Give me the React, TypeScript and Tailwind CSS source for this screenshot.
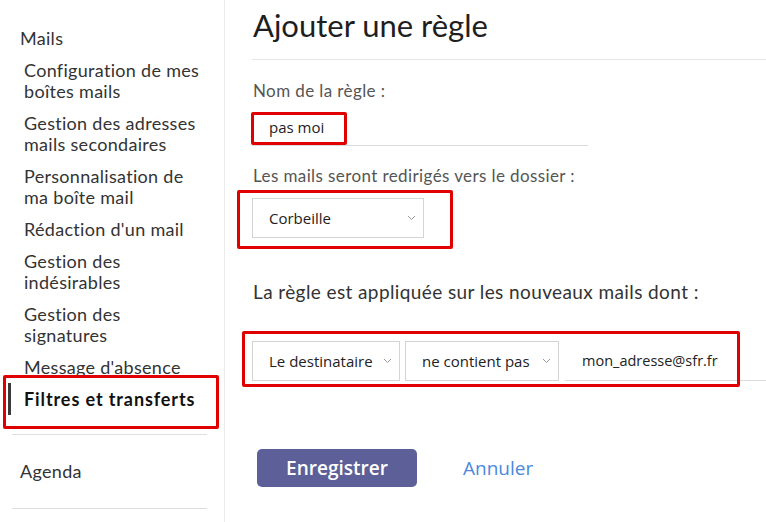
const subItems = [
  ["Configuration de mes", "boîtes mails"],
  ["Gestion des adresses", "mails secondaires"],
  ["Personnalisation de", "ma boîte mail"],
  ["Rédaction d'un mail"],
  ["Gestion des", "indésirables"],
  ["Gestion des", "signatures"],
  ["Message d'absence"],
];

function Chevron() {
  return (
    <svg width="9" height="6" viewBox="0 0 9 6" className="shrink-0">
      <path d="M1 1l3.5 3.5L8 1" fill="none" stroke="#999" strokeWidth="1" />
    </svg>
  );
}

function RedBox({ className }: { className: string }) {
  return <div className={`pointer-events-none absolute rounded-[2px] border-[3px] border-[#e00000] ${className}`} />;
}

function Sidebar() {
  return (
    <aside className="w-[225px] shrink-0 border-r border-[#ececec] font-['Lato',sans-serif] text-[#333]">
      <div className="pl-[20px] pt-[26px] text-[18px] leading-[24px] tracking-[0.3px]">Mails</div>
      <ul className="mt-[10px] flex flex-col gap-[11px] pl-[24px] text-[18px] leading-[21px] tracking-[0.3px]">
        {subItems.map((lines, i) => (
          <li key={i}>
            {lines.map((l) => (
              <div key={l}>{l}</div>
            ))}
          </li>
        ))}
      </ul>
      <div className="relative mt-[5px]">
        <RedBox className="left-[3px] right-[5px] top-[-8px] bottom-[-14px]" />
        <div className="ml-[8px] flex h-[32px] items-center border-l-[3px] border-[#3a3a3a] pl-[13px] text-[18px] font-bold tracking-[0.9px] text-[#111]">
          Filtres et transferts
        </div>
      </div>
      <div className="mx-[12px] mt-[19px] h-px w-[195px] bg-[#dedede]" />
      <div className="mt-[24px] pl-[20px] text-[18px] leading-[24px] tracking-[0.3px]">Agenda</div>
      <div className="mx-[12px] mt-[25px] h-px w-[195px] bg-[#dedede]" />
    </aside>
  );
}

function SelectBox({ value, width }: { value: string; width: string }) {
  return (
    <div
      className={`flex h-[40px] ${width} items-center justify-between border border-[#d4d4d4] bg-white pl-[16px] pr-[7px] font-['Open_Sans',sans-serif] text-[15px] text-[#222]`}
    >
      <span>{value}</span>
      <Chevron />
    </div>
  );
}

export default function App() {
  return (
    <div className="flex h-[522px] w-[766px] overflow-hidden bg-white">
      <Sidebar />
      <main className="flex-1 pl-[27px] pt-[6px] font-['Lato',sans-serif]">
        <h1 className="pl-px text-[31px] leading-[38px] text-[#1e1e1e]">Ajouter une règle</h1>
        <div className="mt-[15px] h-px bg-[#e6e6e6]" />

        <div className="mt-[21px] pl-px text-[17px] leading-[20px] tracking-[0.4px] text-[#555]">Nom de la règle :</div>
        <div className="relative mt-[9px] flex h-[36px] w-[336px] items-center border-b border-[#dcdcdc] pl-[17px] font-['Open_Sans',sans-serif] text-[15px] text-[#222]">
          pas moi
          <RedBox className="left-[-1px] top-[2px] h-[33px] w-[96px]" />
        </div>

        <div className="mt-[20px] pl-px text-[17px] leading-[20px] tracking-[0.4px] text-[#555]">
          Les mails seront redirigés vers le dossier :
        </div>
        <div className="relative mt-[12px] w-fit">
          <SelectBox value="Corbeille" width="w-[172px]" />
          <RedBox className="left-[-15px] top-[-8px] h-[59px] w-[216px]" />
        </div>

        <div className="mt-[42px] pl-px text-[19px] leading-[24px] tracking-[0.4px] text-[#333]">
          La règle est appliquée sur les nouveaux mails dont :
        </div>
        <div className="relative mt-[37px] flex items-stretch">
          <SelectBox value="Le destinataire" width="w-[148px]" />
          <div className="ml-[5px]">
            <SelectBox value="ne contient pas" width="w-[154px]" />
          </div>
          <div className="ml-[6px] flex h-[40px] flex-1 items-center border-b border-[#dcdcdc] pl-[17px] font-['Open_Sans',sans-serif] text-[14.5px] text-[#222]">
            mon_adresse@sfr.fr
          </div>
          <RedBox className="left-[-10px] top-[-10px] h-[56px] w-[498px]" />
        </div>

        <div className="mt-[68px] flex items-center">
          <button className="ml-[5px] flex h-[38px] w-[160px] items-center justify-center rounded-[5px] bg-[#5d6098] font-['Open_Sans',sans-serif] text-[19px] font-semibold text-white">
            Enregistrer
          </button>
          <button className="ml-[46px] font-['Open_Sans',sans-serif] text-[19px] font-medium text-[#4d88e0]">
            Annuler
          </button>
        </div>
      </main>
    </div>
  );
}
